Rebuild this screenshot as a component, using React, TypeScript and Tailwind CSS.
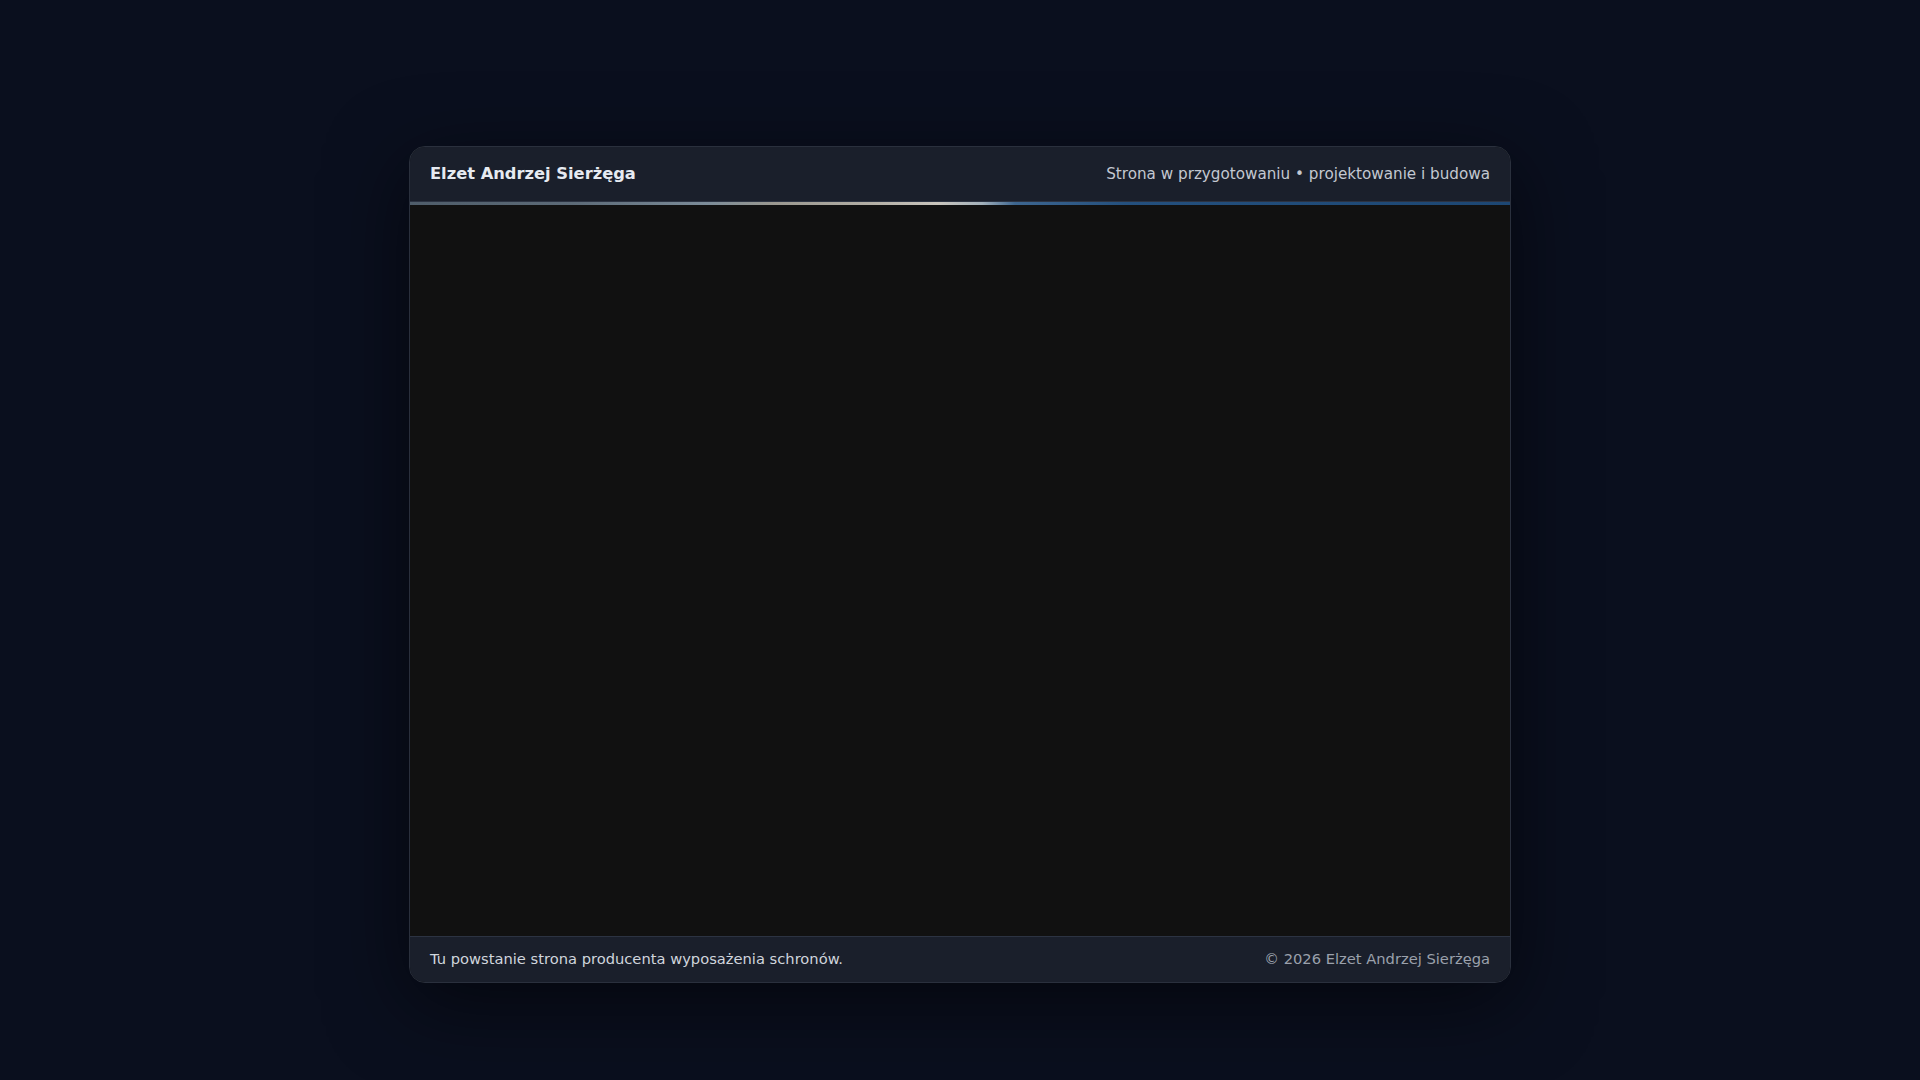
export default function App() {
  return (
    <div className="flex min-h-screen justify-center bg-[#0a0f1e] pt-[146px] font-['DejaVu_Sans',sans-serif]">
      <div className="flex h-[837px] w-[1102px] flex-col overflow-hidden rounded-2xl border border-[#2a303d] bg-[#111111] shadow-[0_20px_80px_rgba(0,0,0,0.55)]">
        {/* Header */}
        <header className="flex h-[55px] shrink-0 items-center justify-between border-b border-[#2c3342] bg-[#1a1f2b] px-5">
          <span className="text-[16.3px] font-bold text-[#e6eaf1]">Elzet Andrzej Sierżęga</span>
          <span className="text-[15.2px] text-[#c3c8d1]">
            Strona w przygotowaniu • projektowanie i budowa
          </span>
        </header>

        {/* Hero image area (only a sliver of the photo loads) */}
        <div className="flex flex-1 flex-col bg-[#111111]">
          <div className="h-[3px] w-full bg-[linear-gradient(90deg,#4f5d6a_0%,#5d6b78_15%,#7c8c99_27%,#9a9890_33%,#b3afa6_42%,#c9c5bd_48%,#a3b1bb_52%,#3d6690_55%,#24507e_65%,#1d4773_100%)]" />
        </div>

        {/* Footer */}
        <footer className="flex h-[46px] shrink-0 items-center justify-between border-t border-[#2c3342] bg-[#1a1f2b] px-5 text-[14.7px]">
          <span className="text-[#d0d5dd]">Tu powstanie strona producenta wyposażenia schronów.</span>
          <span className="text-[#9ba1ac]">© 2026 Elzet Andrzej Sierżęga</span>
        </footer>
      </div>
    </div>
  );
}
